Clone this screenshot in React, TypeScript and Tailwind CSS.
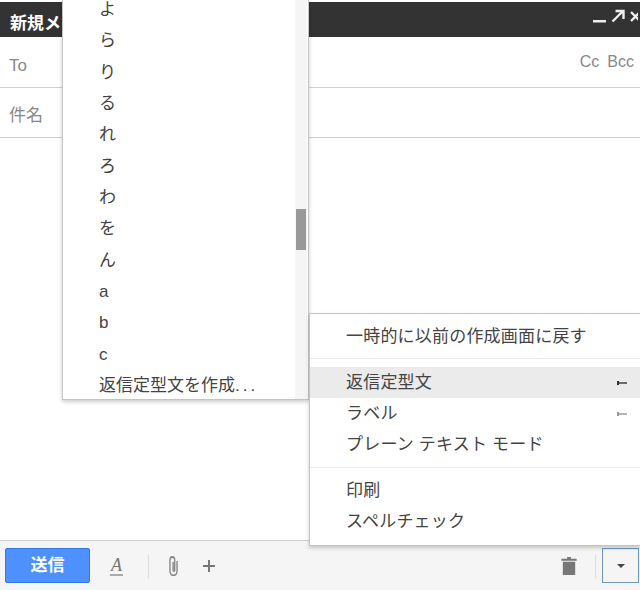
const CJK = 'font-["Liberation_Sans","Noto_Sans_CJK_JP",sans-serif]';

const templates = ['よ', 'ら', 'り', 'る', 'れ', 'ろ', 'わ', 'を', 'ん', 'a', 'b', 'c'];

const TemplateMenu = () => (
  <div className="absolute left-[62px] top-0 w-[247px] h-[400px] bg-white border-x border-b border-[#c4c4c4] shadow-[0_2px_4px_rgba(0,0,0,0.2)] overflow-hidden flex">
    <div className="flex-1 flex flex-col pl-[36px] -mt-[6px] text-[17px] text-[#444]">
      {templates.map((t) => (
        <div key={t} className="h-[31.33px] leading-[31.33px] shrink-0">{t}</div>
      ))}
      <div className="h-[31.33px] leading-[31.33px] shrink-0 whitespace-nowrap">
        返信定型文を作成<span className="tracking-[3px]">...</span>
      </div>
    </div>
    <div className="w-[12px] mr-[1px] bg-[#f5f5f5] flex flex-col px-px">
      <div className="h-[209px] shrink-0" />
      <div className="h-[41px] bg-[#999]" />
    </div>
  </div>
);

const MenuRow = ({ label, active, arrow }: { label: string; active?: boolean; arrow?: string }) => (
  <div className={`h-[31px] flex items-center justify-between pl-[36px] pr-[13px] ${active ? 'bg-[#ebebeb]' : ''}`}>
    <span className="text-[#444] tracking-[0.2px] whitespace-nowrap">{label}</span>
    {arrow && (
      <svg width="10" height="6" viewBox="0 0 10 6">
        <path d="M0 3h10" stroke={arrow} strokeWidth="1.4" />
        <path d="M1 1v4" stroke={arrow} strokeWidth="2" />
      </svg>
    )}
  </div>
);

const MoreMenu = () => (
  <div className="absolute left-[309px] top-[313px] w-[331px] h-[233px] bg-white border-t border-l border-b border-[#c4c4c4] shadow-[0_2px_4px_rgba(0,0,0,0.2)] text-[17px] flex flex-col">
    <div className="h-[44px] shrink-0 flex items-center pl-[36px] pt-[2px] text-[#444] tracking-[0.2px]">一時的に以前の作成画面に戻す</div>
    <div className="border-t border-[#ebebeb] pt-[8px] pb-[7px]">
      <MenuRow label="返信定型文" active arrow="#333" />
      <MenuRow label="ラベル" arrow="#999" />
      <MenuRow label="プレーン テキスト モード" />
    </div>
    <div className="border-t border-[#ebebeb] pt-[7px]">
      <MenuRow label="印刷" />
      <MenuRow label="スペルチェック" />
    </div>
  </div>
);

const App = () => {
  return (
    <div className={`relative w-[640px] h-[590px] overflow-hidden bg-white flex flex-col ${CJK}`}>
      <div className="h-[35px] mt-[2px] shrink-0 bg-[#333] flex items-center justify-between pl-[10px] pr-[2px]">
        <span className="text-white font-bold text-[17px] pt-[8px]">新規メ</span>
        <div className="flex items-center gap-[5px] -mt-[8px]">
          <svg width="13" height="4" viewBox="0 0 13 4" className="mt-[10px]">
            <rect width="13" height="2.5" y="1" fill="#eee" />
          </svg>
          <svg width="14" height="14" viewBox="0 0 14 14">
            <path d="M1.5 12.5 11 3M4.5 2h8v8" stroke="#eee" strokeWidth="2.4" fill="none" />
          </svg>
          <svg width="8" height="12" viewBox="0 0 8 12">
            <path d="M1 2l9 9M10 2l-9 9" stroke="#eee" strokeWidth="2.4" />
          </svg>
        </div>
      </div>
      <div className="h-[51px] shrink-0 border-b border-[#d0d0d0] flex items-center justify-between pl-[9px] pr-[6px] text-[#888]">
        <span className="text-[17px] pt-[7px]">To</span>
        <span className="flex gap-[8px] text-[16px]">
          <span>Cc</span>
          <span>Bcc</span>
        </span>
      </div>
      <div className="h-[50px] shrink-0 border-b border-[#d0d0d0] flex items-center pl-[9px] pt-[6px] text-[17px] text-[#888]">
        件名
      </div>
      <div className="flex-1" />
      <div className="h-[50px] shrink-0 bg-[#f5f5f5] border-t border-[#cfcfcf] flex items-center pl-[5px] pr-px">
        <div className="w-[85px] h-[35px] bg-[#4d90fe] border border-[#3079ed] rounded-[2px] flex items-center justify-center text-white font-bold text-[17px]">
          送信
        </div>
        <span className="ml-[20px] w-[13px] text-center font-['Liberation_Serif',serif] italic text-[18px] leading-[18px] text-[#777] border-b-2 border-[#aaa]">
          A
        </span>
        <div className="ml-[25px] w-px h-[24px] bg-[#ddd]" />
        <svg width="11" height="20" viewBox="0 0 14 20" className="ml-[19px]" preserveAspectRatio="none">
          <path d="M11.5 5v10a4.5 4.5 0 0 1-9 0V4a3 3 0 0 1 6 0v10a1 1 0 0 1-2 0V6" fill="none" stroke="#888" strokeWidth="1.8" />
        </svg>
        <svg width="12" height="12" viewBox="0 0 12 12" className="ml-[24px]">
          <path d="M6 0v12M0 6h12" stroke="#777" strokeWidth="2" />
        </svg>
        <div className="flex-1" />
        <svg width="16" height="19" viewBox="0 0 16 20">
          <path d="M6 1h4v2h6v2H0V3h6zM1.5 6h13v14h-13z" fill="#777" />
        </svg>
        <div className="ml-[18px] w-px h-[24px] bg-[#ddd]" />
        <div className="ml-[6px] w-[37px] h-[35px] border border-[#6f95c2] bg-[#f5f5f5] flex items-center justify-center">
          <svg width="8" height="4" viewBox="0 0 8 4">
            <path d="M0 0h8L4 4z" fill="#444" />
          </svg>
        </div>
      </div>
      <TemplateMenu />
      <MoreMenu />
    </div>
  );
};

export default App;
